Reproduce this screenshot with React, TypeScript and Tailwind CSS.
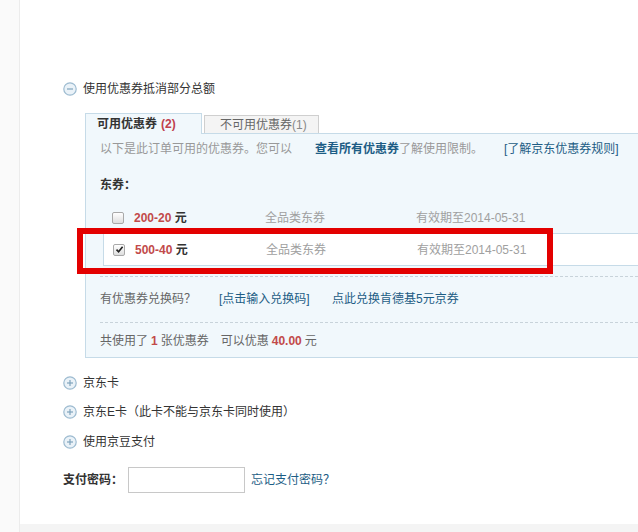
import React from 'react';

const font = { fontFamily: '"Liberation Sans", "Noto Sans CJK SC", sans-serif' };

function CircleIcon({ plus }: { plus?: boolean }) {
  return (
    <svg width="14" height="14" viewBox="0 0 14 14" className="shrink-0">
      <circle cx="7" cy="7" r="6.2" fill="#eaf2f8" stroke="#9dbbd0" strokeWidth="1.2" />
      <line x1="4" y1="7" x2="10" y2="7" stroke="#7fa3bd" strokeWidth="1.2" />
      {plus && <line x1="7" y1="4" x2="7" y2="10" stroke="#7fa3bd" strokeWidth="1.2" />}
    </svg>
  );
}

function Check({ checked }: { checked?: boolean }) {
  return (
    <span className="flex h-[12px] w-[12px] shrink-0 items-center justify-center rounded-[2px] border border-[#a9a9a9] bg-gradient-to-b from-[#ffffff] to-[#dedede]">
      {checked && (
        <svg width="9" height="9" viewBox="0 0 9 9">
          <path d="M1.5 4.6 L3.6 6.8 L7.6 1.8" fill="none" stroke="#222" strokeWidth="1.6" />
        </svg>
      )}
    </span>
  );
}

function CouponRow({ amount, checked }: { amount: string; checked?: boolean }) {
  return (
    <div className="flex h-full items-center pl-[9px]">
      <Check checked={checked} />
      <span className="ml-[10px] w-[131px]">
        <span className="font-bold text-[#c24a4a]">{amount}</span>
        <span className="font-bold text-[#333]"> 元</span>
      </span>
      <span className="w-[151px] text-[#a0a0a0]">全品类东券</span>
      <span className="text-[#a0a0a0]">有效期至2014-05-31</span>
    </div>
  );
}

export default function App() {
  return (
    <div className="flex min-h-[532px] w-[638px] overflow-hidden bg-white text-[12px] text-[#333]" style={font}>
      <div className="w-[20px] shrink-0 border-r border-[#ececec] bg-[#fafafa]" />
      <div className="flex min-w-0 flex-1 flex-col">
        <div className="pl-[43px] pt-[80px]">
          {/* 优惠券 */}
          <div className="flex h-[18px] items-center gap-[6px]">
            <CircleIcon />
            <span>使用优惠券抵消部分总额</span>
          </div>

          <div className="ml-[22px] mt-[15px]">
            <div className="flex items-end">
              <div className="relative z-10 -mb-px flex h-[21px] w-[117px] items-center border border-b-0 border-[#c6dbe8] bg-[#f1f8fc] pl-[11px] font-bold">
                可用优惠券<span className="ml-[4px] text-[#c0404c]">(2)</span>
              </div>
              <div className="ml-[2px] flex h-[18px] w-[115px] items-center border border-b-0 border-[#cfcfcf] bg-[#f4f4f4] pl-[15px] text-[#666]">
                不可用优惠券<span className="text-[#888]">(1)</span>
              </div>
            </div>

            <div className="border border-r-0 border-[#c6dbe8] bg-[#f1f8fc] pb-[6px] pl-[14px]">
              <div className="mt-[5px] flex h-[20px] items-center">
                <span className="w-[215px] text-[#999]">以下是此订单可用的优惠券。您可以</span>
                <span className="font-bold text-[#1d5d85]">查看所有优惠券</span>
                <span className="w-[105px] text-[#999]">了解使用限制。</span>
                <span className="text-[#1d5d85]">[了解京东优惠券规则]</span>
              </div>

              <div className="mt-[16px] flex h-[20px] items-center font-bold">东券：</div>

              <div className="ml-[3px] mt-[13px] h-[20px]">
                <CouponRow amount="200-20" />
              </div>

              <div className="relative ml-[3px] mt-[5px] h-[33px] border border-r-0 border-[#c6dbe8] bg-white">
                <CouponRow amount="500-40" checked />
                <div className="absolute -left-[27px] -top-[6px] h-[46px] w-[476px] border-[6px] border-[#e30000]" />
              </div>

              <div className="mt-[10px] border-t border-dashed border-[#c8d3da]" />

              <div className="mt-[12px] flex h-[20px] items-center">
                <span className="w-[119px] text-[#666]">有优惠券兑换码？</span>
                <span className="w-[113px] text-[#1d5d85]">[点击输入兑换码]</span>
                <span className="text-[#1d5d85]">点此兑换肯德基5元京券</span>
              </div>

              <div className="mt-[13px] border-t border-dashed border-[#c8d3da]" />

              <div className="mt-[8px] flex h-[20px] items-center text-[#666]">
                <span>共使用了 </span>
                <span className="mx-[3px] font-bold text-[#c24a4a]">1</span>
                <span>张优惠券</span>
                <span className="ml-[12px]">可以优惠 </span>
                <span className="mx-[3px] font-bold text-[#c24a4a]">40.00</span>
                <span>元</span>
              </div>
            </div>
          </div>

          {/* 其他支付方式 */}
          <div className="mt-[15px] flex h-[20px] items-center gap-[6px]">
            <CircleIcon plus />
            <span>京东卡</span>
          </div>
          <div className="mt-[9px] flex h-[20px] items-center gap-[6px]">
            <CircleIcon plus />
            <span>京东E卡（此卡不能与京东卡同时使用）</span>
          </div>
          <div className="mt-[10px] flex h-[20px] items-center gap-[6px]">
            <CircleIcon plus />
            <span>使用京豆支付</span>
          </div>

          <div className="mt-[15px] flex h-[26px] items-center">
            <span className="w-[65px] font-bold">支付密码：</span>
            <input type="password" className="h-[26px] w-[117px] border border-[#c8c8c8] bg-white outline-none" />
            <span className="ml-[6px] text-[#1d5d85]">忘记支付密码？</span>
          </div>
        </div>
        <div className="mt-[31px] h-[20px] bg-[#f4f4f4]" />
      </div>
    </div>
  );
}
